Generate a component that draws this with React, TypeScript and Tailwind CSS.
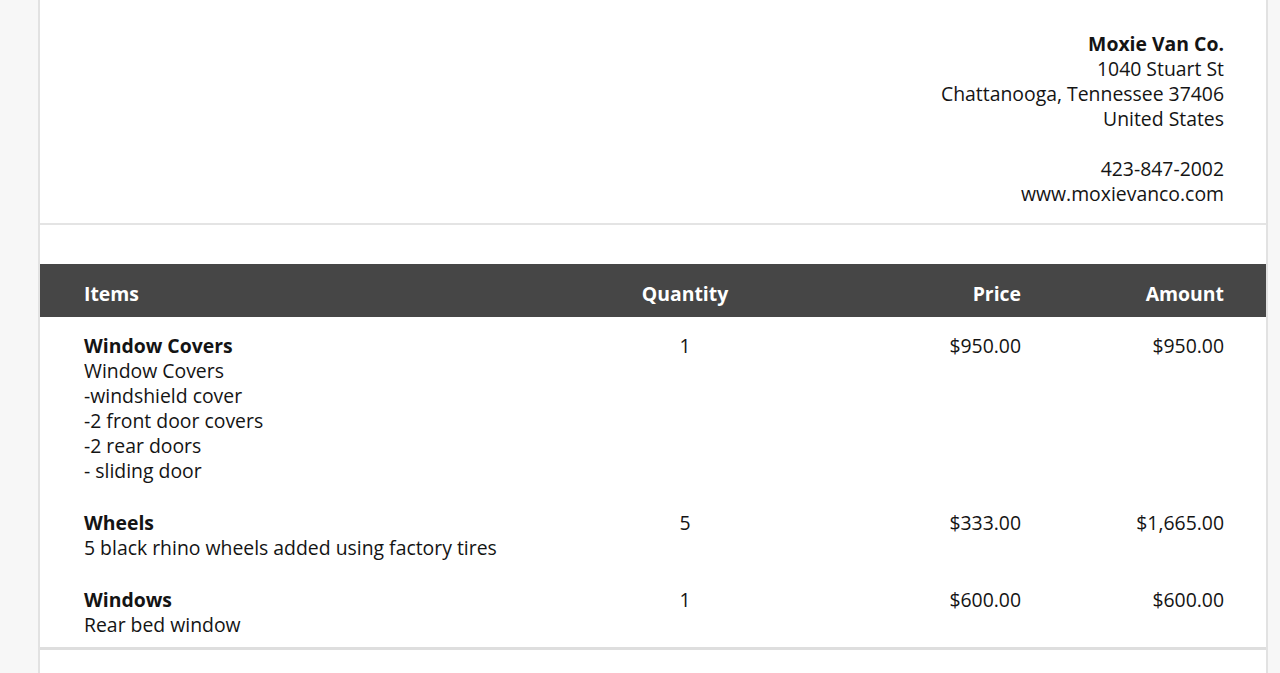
const COMPANY = {
  name: "Moxie Van Co.",
  street: "1040 Stuart St",
  city: "Chattanooga, Tennessee 37406",
  country: "United States",
  phone: "423-847-2002",
  site: "www.moxievanco.com",
};

const ITEMS = [
  {
    title: "Window Covers",
    lines: ["Window Covers", "-windshield cover", "-2 front door covers", "-2 rear doors", "- sliding door"],
    qty: "1",
    price: "$950.00",
    amount: "$950.00",
  },
  {
    title: "Wheels",
    lines: ["5 black rhino wheels added using factory tires"],
    qty: "5",
    price: "$333.00",
    amount: "$1,665.00",
  },
  {
    title: "Windows",
    lines: ["Rear bed window"],
    qty: "1",
    price: "$600.00",
    amount: "$600.00",
  },
];

const cols = "grid grid-cols-[516px_170px_251px_203px]";

export default function App() {
  return (
    <div
      className="w-full h-[673px] overflow-hidden bg-[#f7f7f7] text-[#141414] text-[19.4px] leading-[25px]"
      style={{ fontFamily: "'Open Sans', Lato, sans-serif" }}
    >
      <div className="ml-[38px] w-[1230px] h-full bg-white border-x-2 border-[#e2e2e2] flex flex-col">
        {/* Business details */}
        <div className="-mt-[26px] pr-[42px] pb-[17px] flex flex-col items-end text-right border-b-2 border-[#e4e4e4]">
          <p className="text-[#b0b0b0] mb-[32px] pr-[12px]">Thank you for your prompt payment. Please pay by the closing</p>
          <p className="font-bold">{COMPANY.name}</p>
          <p>{COMPANY.street}</p>
          <p>{COMPANY.city}</p>
          <p>{COMPANY.country}</p>
          <p className="mt-[25px]">{COMPANY.phone}</p>
          <p>{COMPANY.site}</p>
        </div>

        {/* Items table */}
        <div className="mt-[39px]">
          <div className={`${cols} h-[53px] pt-[5px] items-center bg-[#464646] text-white font-bold pl-[44px]`}>
            <div>Items</div>
            <div className="text-center">Quantity</div>
            <div className="text-right">Price</div>
            <div className="text-right">Amount</div>
          </div>

          <div className="pt-[2px] pb-[10px] border-b-[3px] border-[#dedede]">
            {ITEMS.map((item, i) => (
              <div
                key={item.title}
                className={`${cols} pl-[44px] pt-[14px] ${i === ITEMS.length - 1 ? "pb-0" : "pb-[13px]"}`}
              >
                <div>
                  <p className="font-bold">{item.title}</p>
                  {item.lines.map((l) => (
                    <p key={l}>{l}</p>
                  ))}
                </div>
                <div className="text-center">{item.qty}</div>
                <div className="text-right">{item.price}</div>
                <div className="text-right">{item.amount}</div>
              </div>
            ))}
          </div>
        </div>
      </div>
    </div>
  );
}
